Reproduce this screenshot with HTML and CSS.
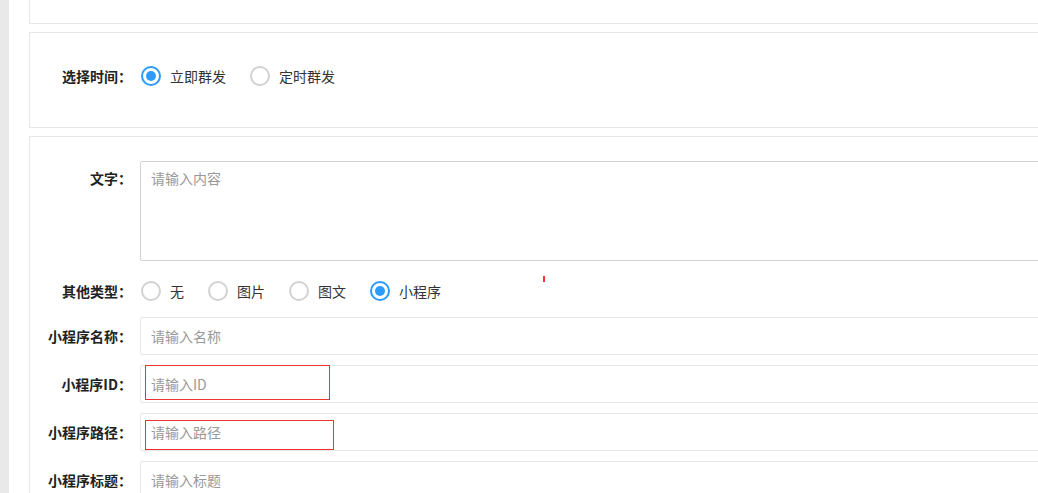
FILE: index.html
```html
<!DOCTYPE html>
<html lang="zh-CN">
<head>
  <meta charset="UTF-8" />
  <meta name="viewport" content="width=device-width, initial-scale=1.0"/>
  <title>群发消息</title>
  <link rel="stylesheet" href="styles.css">
</head>
<body>
  <div class="layout">
    <div class="side"></div>

    <div class="main">
      <div class="card card-top"></div>

      <!-- 发送时间 -->
      <div class="card card-time">
        <div class="form-item">
          <label class="form-label">选择时间：</label>
          <div class="radio-group">
            <span class="radio checked"><i class="radio-icon"></i>立即群发</span>
            <span class="radio"><i class="radio-icon"></i>定时群发</span>
          </div>
        </div>
      </div>

      <!-- 内容 -->
      <div class="card card-content">
        <div class="form-item form-item-text">
          <label class="form-label">文字：</label>
          <textarea class="textarea" placeholder="请输入内容"></textarea>
        </div>

        <div class="form-item form-item-radio">
          <label class="form-label">其他类型：</label>
          <div class="radio-group">
            <span class="radio"><i class="radio-icon"></i>无</span>
            <span class="radio"><i class="radio-icon"></i>图片</span>
            <span class="radio"><i class="radio-icon"></i>图文</span>
            <span class="radio checked"><i class="radio-icon"></i>小程序</span>
          </div>
        </div>

        <div class="form-item form-item-input">
          <label class="form-label">小程序名称：</label>
          <div class="input-wrap">
            <input class="input" type="text" placeholder="请输入名称">
          </div>
        </div>

        <div class="form-item form-item-input">
          <label class="form-label">小程序ID：</label>
          <div class="input-wrap">
            <input class="input" type="text" placeholder="请输入ID">
            <span class="mark mark-id"></span>
          </div>
        </div>

        <div class="form-item form-item-input">
          <label class="form-label">小程序路径：</label>
          <div class="input-wrap">
            <input class="input" type="text" placeholder="请输入路径">
            <span class="mark mark-path"></span>
          </div>
        </div>

        <div class="form-item form-item-input">
          <label class="form-label">小程序标题：</label>
          <div class="input-wrap">
            <input class="input" type="text" placeholder="请输入标题">
          </div>
        </div>

        <span class="dot-red"></span>
      </div>
    </div>
  </div>
</body>
</html>
```

FILE: styles.css
```css
* {
  box-sizing: border-box;
}
html, body {
  margin: 0;
  height: 100%;
  overflow: hidden;
}
body {
  background: #fff;
  color: #333;
  font-family: "Noto Sans CJK SC", "Noto Sans", sans-serif;
  font-size: 14px;
}
.layout {
  display: flex;
  height: 100%;
}
.side {
  flex: none;
  width: 9px;
  background: #e9e9e9;
}
.main {
  flex: none;
  width: 1100px;
  padding-left: 20px;
}

.card {
  background: #fff;
  border: 1px solid #e6e6e6;
}
.card-top {
  height: 24px;
  border-top: none;
}
.card-time {
  margin-top: 8px;
  padding: 24px 0 32px;
}
.card-content {
  position: relative;
  margin-top: 8px;
  padding-top: 24px;
  height: 600px;
}

.form-item {
  display: flex;
  align-items: center;
  min-height: 38px;
}
.form-label {
  flex: none;
  width: 110px;
  padding-right: 8px;
  text-align: right;
  font-weight: bold;
  color: #222;
  line-height: 20px;
}
.form-item-text {
  align-items: flex-start;
}
.form-item-text .form-label {
  padding-top: 7px;
}
.form-item-radio {
  margin-top: 14px;
  min-height: 32px;
}
.form-item-input {
  margin-top: 10px;
}

.textarea {
  flex: 1;
  height: 100px;
  padding: 6px 10px;
  border: 1px solid #d2d2d2;
  border-radius: 2px;
  font-family: inherit;
  font-size: 14px;
  line-height: 20px;
  resize: none;
  outline: none;
}
.input-wrap {
  position: relative;
  flex: 1;
}
.input {
  display: block;
  width: 100%;
  height: 38px;
  padding: 0 10px;
  border: 1px solid #e6e6e6;
  border-radius: 2px;
  font-family: inherit;
  font-size: 14px;
  outline: none;
}
.textarea::placeholder,
.input::placeholder {
  color: #999;
}

.radio-group {
  display: flex;
  align-items: center;
  padding-left: 1px;
}
.radio {
  display: flex;
  align-items: center;
  margin-right: 24px;
  line-height: 20px;
  color: #333;
}
.radio-icon {
  position: relative;
  width: 20px;
  height: 20px;
  margin-right: 9px;
  border: 2px solid #d2d2d2;
  border-radius: 50%;
}
.radio.checked .radio-icon {
  border-color: #2b9bff;
}
.radio.checked .radio-icon::after {
  content: "";
  position: absolute;
  left: 3px;
  top: 3px;
  width: 10px;
  height: 10px;
  border-radius: 50%;
  background: #2b9bff;
}

/* 红框标注 */
.mark {
  position: absolute;
  left: 5px;
  border: 1px solid #ee3333;
  pointer-events: none;
}
.mark-id {
  top: 0;
  width: 185px;
  height: 35px;
}
.mark-path {
  top: 7px;
  width: 189px;
  height: 30px;
}
.dot-red {
  position: absolute;
  left: 513px;
  top: 139px;
  width: 2px;
  height: 6px;
  background: #f33;
}
```
